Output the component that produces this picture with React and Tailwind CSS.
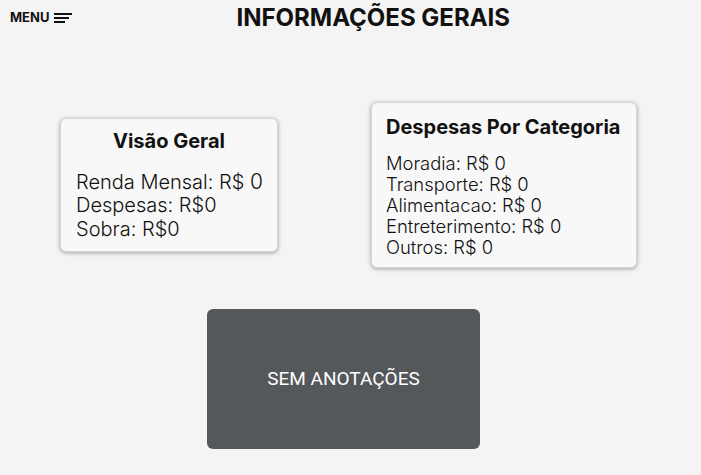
const MenuIcon = () => (
  <svg width="19" height="12" viewBox="0 0 19 12" className="ml-[5px]">
    <rect x="0" y="1" width="18" height="2" fill="#111" />
    <rect x="0" y="5" width="15" height="2" fill="#111" />
    <rect x="0" y="9" width="11" height="2" fill="#111" />
  </svg>
);

const Card = ({ children, className }) => (
  <div
    className={`rounded-md border border-gray-300 bg-[#f8f8f8] shadow-[0_1px_4px_rgba(0,0,0,0.35)] ${className}`}
  >
    {children}
  </div>
);

export default function App() {
  return (
    <div className="h-[475px] w-[701px] bg-[#f4f4f4] font-['Inter',sans-serif] text-[#111]">
      <header className="flex h-[35px] items-center">
        <button className="flex items-center pl-[10px] text-[13px] font-bold text-[#111]">
          MENU
          <MenuIcon />
        </button>
        <h1 className="ml-[163px] text-[24px] font-bold leading-none">INFORMAÇÕES GERAIS</h1>
      </header>

      <section className="mt-[67px] flex items-center pl-[60px]">
        <Card className="w-[218px] px-[15px] pb-[10px] pt-[9px]">
          <h2 className="text-center text-[20px] font-bold leading-[26px]">Visão Geral</h2>
          <div className="mt-[16px] whitespace-nowrap text-[20px] font-light leading-[23.5px]">
            <p>
              Renda Mensal: R$ <span className="text-[21px]">0</span>
            </p>
            <p>Despesas: R$0</p>
            <p>Sobra: R$0</p>
          </div>
        </Card>

        <Card className="ml-[93px] w-[266px] px-[14px] pb-[9px] pt-[11px]">
          <h2 className="text-[20px] font-bold leading-[26px]">Despesas Por Categoria</h2>
          <div className="mt-[13px] text-[18.4px] font-light leading-[21px]">
            <p>Moradia: R$ 0</p>
            <p>Transporte: R$ 0</p>
            <p>Alimentacao: R$ 0</p>
            <p>Entreterimento: R$ 0</p>
            <p>Outros: R$ 0</p>
          </div>
        </Card>
      </section>

      <div className="mt-[41px] flex pl-[207px]">
        <div className="flex h-[140px] w-[273px] items-center justify-center rounded-md bg-[#55585b] font-['Roboto',sans-serif] text-[19px] text-white">
          SEM ANOTAÇÕES
        </div>
      </div>
    </div>
  );
}
